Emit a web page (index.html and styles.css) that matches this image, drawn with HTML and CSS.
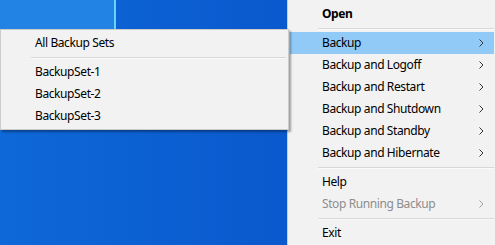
FILE: index.html
```html
<!DOCTYPE html>
<html lang="en">
<head>
    <meta charset="UTF-8">
    <meta name="viewport" content="width=device-width, initial-scale=1.0">
    <title>Backup tray menu</title>
    <link rel="stylesheet" href="styles.css">
</head>
<body>
    <div class="desktop">
        <div class="menu submenu">
            <div class="item"><span>All Backup Sets</span></div>
            <div class="sep"></div>
            <div class="item"><span>BackupSet-1</span></div>
            <div class="item"><span>BackupSet-2</span></div>
            <div class="item"><span>BackupSet-3</span></div>
        </div>

        <div class="menu main-menu">
            <div class="item default"><span>Open</span></div>
            <div class="sep"></div>
            <div class="item active"><span>Backup</span><svg class="arrow" width="5" height="8" viewBox="0 0 5 8"><polyline points="0.5,0.5 4,4 0.5,7.5" /></svg></div>
            <div class="item"><span>Backup and Logoff</span><svg class="arrow" width="5" height="8" viewBox="0 0 5 8"><polyline points="0.5,0.5 4,4 0.5,7.5" /></svg></div>
            <div class="item"><span>Backup and Restart</span><svg class="arrow" width="5" height="8" viewBox="0 0 5 8"><polyline points="0.5,0.5 4,4 0.5,7.5" /></svg></div>
            <div class="item"><span>Backup and Shutdown</span><svg class="arrow" width="5" height="8" viewBox="0 0 5 8"><polyline points="0.5,0.5 4,4 0.5,7.5" /></svg></div>
            <div class="item"><span>Backup and Standby</span><svg class="arrow" width="5" height="8" viewBox="0 0 5 8"><polyline points="0.5,0.5 4,4 0.5,7.5" /></svg></div>
            <div class="item"><span>Backup and Hibernate</span><svg class="arrow" width="5" height="8" viewBox="0 0 5 8"><polyline points="0.5,0.5 4,4 0.5,7.5" /></svg></div>
            <div class="sep"></div>
            <div class="item"><span>Help</span></div>
            <div class="item disabled"><span>Stop Running Backup</span><svg class="arrow" width="5" height="8" viewBox="0 0 5 8"><polyline points="0.5,0.5 4,4 0.5,7.5" /></svg></div>
            <div class="sep"></div>
            <div class="item"><span>Exit</span></div>
        </div>
    </div>
</body>
</html>
```

FILE: styles.css
```css
body {
    margin: 0;
    overflow: hidden;
    font-family: "Noto Sans", "Open Sans", sans-serif;
    font-size: 12px;
    letter-spacing: -0.4px;
    color: #000;
}
.desktop {
    position: relative;
    width: 495px;
    height: 245px;
    overflow: hidden;
    background:
        linear-gradient(to right, #2383e4 0 114px, #63d3f6 114px 116px, transparent 116px) no-repeat 0 0 / 100% 30px,
        linear-gradient(to right, #0e68d7, #0a58cd 60%, #0953ca);
}
.menu {
    position: absolute;
    box-sizing: border-box;
    background-color: #f2f2f2;
    border: 1px solid #cccccc;
    padding: 2px;
}
.main-menu {
    left: 287px;
    top: 0;
    width: 210px;
    height: 250px;
    border-top: none;
    padding-top: 3px;
}
.submenu {
    left: 0;
    top: 29px;
    width: 289px;
    z-index: 2;
    box-shadow: 2px 2px 2px rgba(0, 0, 0, 0.35);
}
.item {
    display: flex;
    align-items: center;
    justify-content: space-between;
    height: 22px;
    padding: 0 10px 0 32px;
    white-space: nowrap;
}
.item span {
    line-height: 22px;
}
.item.default {
    font-weight: bold;
}
.item.active {
    background-color: #91c9f7;
}
.item.disabled {
    color: #8d8d8d;
}
.arrow polyline {
    fill: none;
    stroke: #333;
    stroke-width: 1;
}
.item.disabled .arrow polyline {
    stroke: #a0a0a0;
}
.sep {
    height: 0;
    margin: 3px 0 2px 28px;
    border-top: 1px solid #d7d7d7;
    border-bottom: 1px solid #fafafa;
}
```
